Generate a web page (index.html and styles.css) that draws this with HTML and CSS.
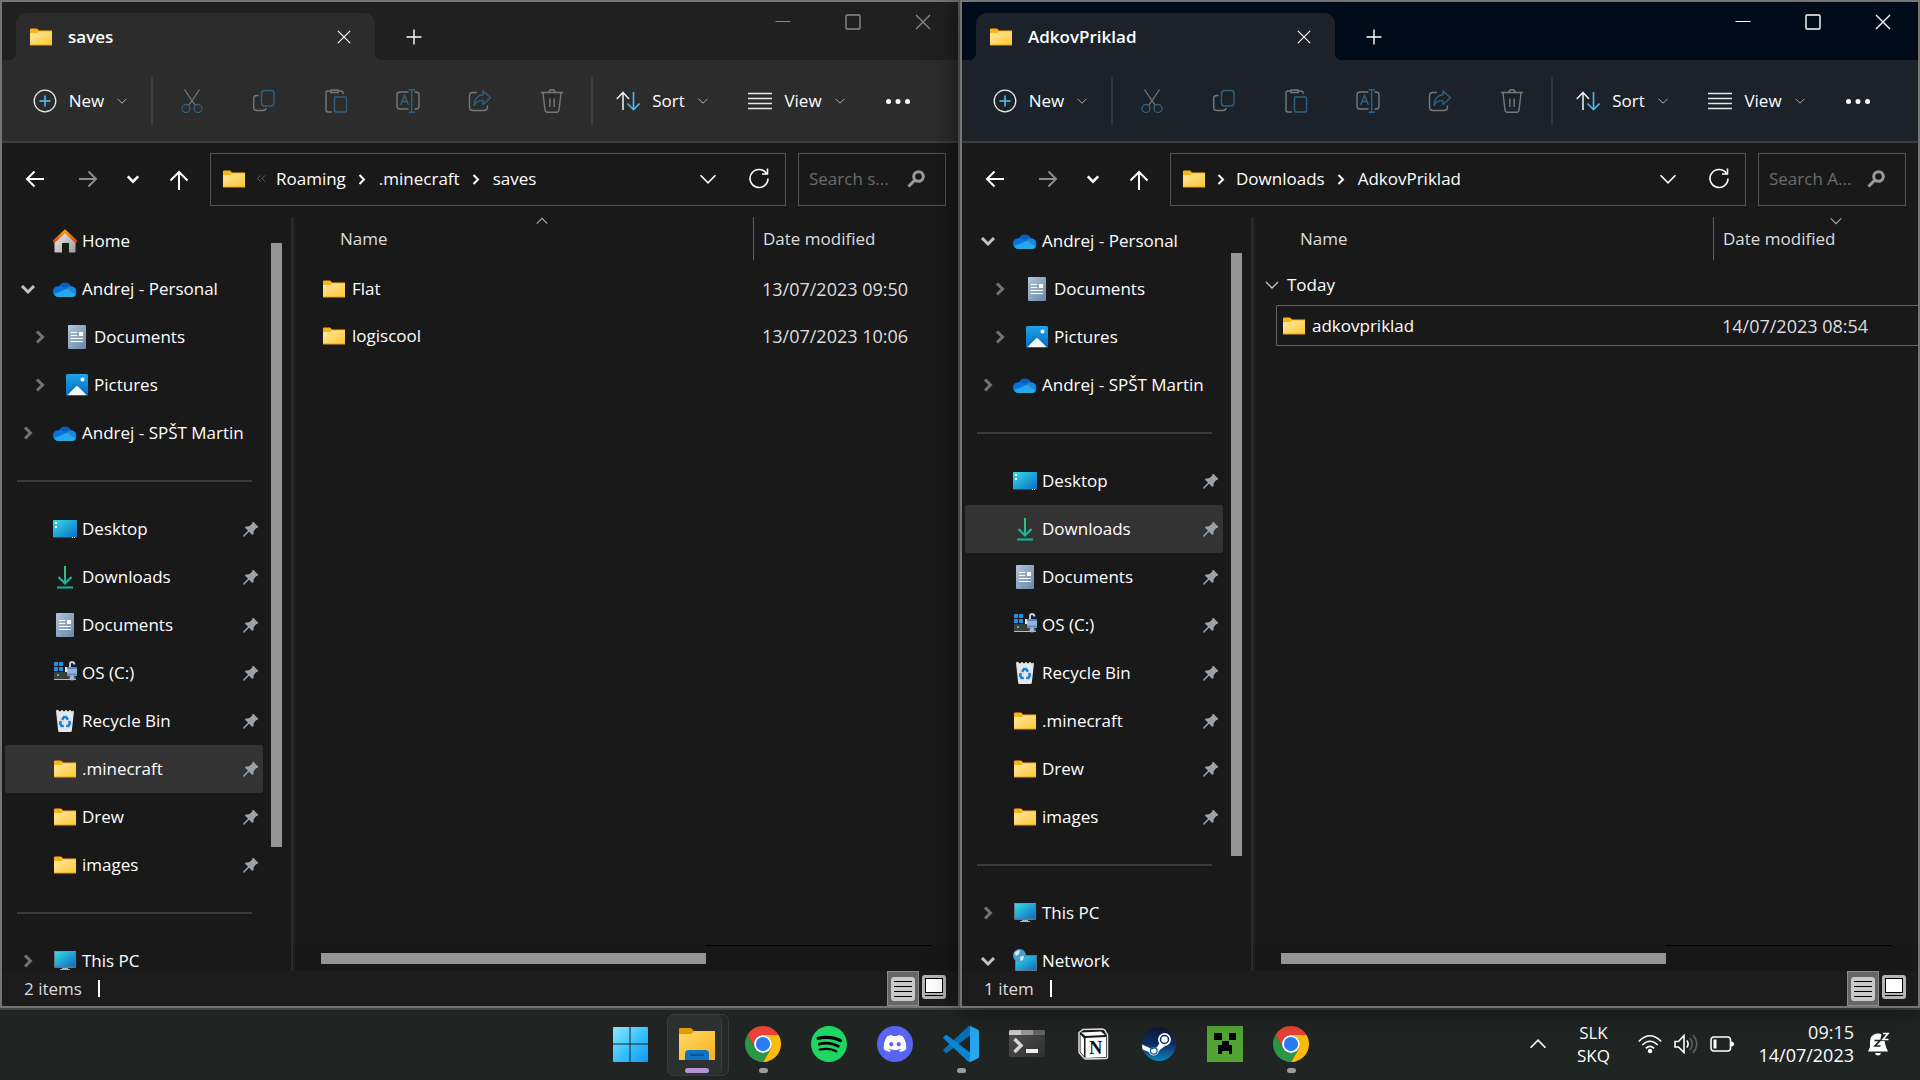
FILE: index.html
```
<!DOCTYPE html>
<html lang="en">
<head>
<meta charset="utf-8">
<title>File Explorer</title>
<link rel="stylesheet" href="styles.css">
</head>
<body>
<svg class="sprite" width="0" height="0" aria-hidden="true">
  <defs>
    <linearGradient id="g-folder" x1="0" y1="0" x2="1" y2="1"><stop offset="0" stop-color="#ffe9a2"/><stop offset="1" stop-color="#ffc732"/></linearGradient>
    <linearGradient id="g-screen" x1="0" y1="0" x2="1" y2="1"><stop offset="0" stop-color="#35dbe6"/><stop offset="1" stop-color="#0b6cc4"/></linearGradient>
    <linearGradient id="g-doc" x1="0" y1="0" x2="1" y2="1"><stop offset="0" stop-color="#b4c6dc"/><stop offset="1" stop-color="#6787a6"/></linearGradient>
    <linearGradient id="g-pic" x1="0" y1="0" x2="0" y2="1"><stop offset="0" stop-color="#1fa4e8"/><stop offset="1" stop-color="#0668c0"/></linearGradient>
    <linearGradient id="g-down" gradientUnits="userSpaceOnUse" x1="0" y1="0" x2="0" y2="24"><stop offset="0" stop-color="#37c978"/><stop offset="1" stop-color="#10b39a"/></linearGradient>
    <linearGradient id="g-wall" x1="0" y1="0" x2="1" y2="1"><stop offset="0" stop-color="#f2f2f2"/><stop offset="1" stop-color="#9b9b9b"/></linearGradient>
    <linearGradient id="g-roof" x1="0" y1="0" x2="0" y2="1"><stop offset="0" stop-color="#ff9a12"/><stop offset="1" stop-color="#d84f0c"/></linearGradient>
    <linearGradient id="g-win" x1="0" y1="0" x2="1" y2="1"><stop offset="0" stop-color="#8fe6ff"/><stop offset=".5" stop-color="#3cc3fb"/><stop offset="1" stop-color="#0c9af5"/></linearGradient>
    <linearGradient id="g-exp" x1="0" y1="0" x2="1" y2="1"><stop offset="0" stop-color="#ffd968"/><stop offset="1" stop-color="#f9b21b"/></linearGradient>
    <linearGradient id="g-steam" x1="0" y1="0" x2="0" y2="1"><stop offset="0" stop-color="#131634"/><stop offset=".5" stop-color="#0d2f63"/><stop offset="1" stop-color="#0f84bd"/></linearGradient>
    <linearGradient id="g-term" x1="0" y1="0" x2="1" y2="1"><stop offset="0" stop-color="#505050"/><stop offset="1" stop-color="#303030"/></linearGradient>
  </defs>
  <symbol id="folder" viewBox="0 0 24 24"><path d="M1 4.500Q1 3.500 2 3.500H8L10 5.500H23V20H1z" fill="#fcb414"/><path d="M1 8H8.500L10 6.500H23V20H1z" fill="url(#g-folder)"/><path d="M1 20H23" stroke="#e8a21a"/></symbol>
  <symbol id="home" viewBox="0 0 24 24"><path d="M1.500 11.500 12 2 22.500 11.500V22.500Q22.500 23.500 21.500 23.500H16V14H9V23.500H2.500Q1.500 23.500 1.500 22.500z" fill="url(#g-wall)"/><path d="M1.400 12.200 12 2.200 22.600 12.200" fill="none" stroke="url(#g-roof)" stroke-width="3" stroke-linecap="round"/></symbol>
  <symbol id="cloud" viewBox="0 0 24 24"><path d="M6 9.500A6.500 6 0 0 1 17.700 8.500L20 12 10 14z" fill="#0a5fbb"/><path d="M5 20A5.200 5.300 0 0 1 5.500 9.200Q8.500 8.200 14 12L10 20z" fill="#0a74d6"/><path d="M12.500 12.500Q15.500 8 19 9.500A5 5.300 0 0 1 19 20H15z" fill="#1588dd"/><path d="M1.500 17 14 11.700 22.800 17.500Q22 20 19 20H5Q2.500 20 1.500 17z" fill="#28a8ea"/></symbol>
  <symbol id="doc" viewBox="0 0 24 24"><rect x="3" y="0" width="18" height="24" rx="1" fill="url(#g-doc)"/><path d="M6 7.500H12M6 10.500H12M6 13.500H18M6 16.500H18" stroke="#fff"/><rect x="14" y="7" width="4" height="4" fill="#fff"/></symbol>
  <symbol id="pic" viewBox="0 0 24 24"><rect x="1" y="1" width="22" height="22" rx="1.500" fill="url(#g-pic)"/><path d="M2.500 22 11 13.500Q12 12.500 13 13.500L21.500 22z" fill="#f4f8ff"/><circle cx="17.500" cy="6.500" r="2" fill="#fff"/></symbol>
  <symbol id="desk" viewBox="0 0 24 24"><rect x="0" y="3" width="24" height="18" rx="1" fill="url(#g-screen)"/><path d="M0 20.500H24" stroke="#0a4f8a"/><path d="M2 5h2v2h-2zM2 9h2v2h-2zM19 20h1v1h-1zM21 20h1v1h-1z" fill="#fff"/></symbol>
  <symbol id="down" viewBox="0 0 24 24"><path d="M12 1V18M5.500 12 12 18.500 18.500 12M4 22.500H20" fill="none" stroke="url(#g-down)" stroke-width="2"/></symbol>
  <symbol id="drive" viewBox="0 0 24 24"><path d="M1 7 3 4H20L23 9V19H1z" fill="#e6e9ee"/><rect x="1" y="11" width="22" height="7" fill="#3b3d40"/><path d="M1 18.500H23" stroke="#bbb"/><rect x="4" y="13" width="2" height="2" fill="#2edb3a"/><path d="M0 0h12v11h-12z" fill="#191919"/><path d="M1 1h4v4h-4zM6 1h4v4h-4zM1 6h4v4h-4zM6 6h4v4h-4z" fill="#1a94e6"/><path d="M10 3h14v3h-14z" fill="#191919"/><path d="M17 7V3Q17 1 19 1T21.500 3.500" fill="none" stroke="#c9ced6" stroke-width="2"/><rect x="14" y="6" width="10" height="9" rx="1" fill="#9fb4cc"/><path d="M14 7H24M14 13.500H24" stroke="#3e90d8" stroke-width="2"/><circle cx="19" cy="17" r="2.500" fill="#aeb5bd"/></symbol>
  <symbol id="bin" viewBox="0 0 24 24"><path d="M3 2 21 2 18.800 22Q18.700 23 17.700 23H6.300Q5.300 23 5.200 22z" fill="#e4e7ea"/><path d="M3 2 5 1 7 3 9 1 11 3 13 1 15 3 17 1 19 3 21 2" fill="#fff" stroke="#b9bec4"/><g fill="none" stroke="#1782dd" stroke-width="2.500"><path d="M9 10.800 11 8H13L15 10.800M16 12 17 14.500 15.500 17H13.200M10.800 17H8.500L7 14.500 8 12"/></g></symbol>
  <symbol id="pc" viewBox="0 0 24 24"><rect x="1" y="2" width="22" height="17" rx="1" fill="#5e7687"/><rect x="2" y="3" width="20" height="14.500" fill="url(#g-screen)"/><path d="M1 2.500H23" stroke="#7f939f"/><path d="M9 19h6v1h2v1H7v-1h2z" fill="#a8b8c4"/></symbol>
  <symbol id="net" viewBox="0 0 24 24"><rect x="2" y="6" width="22" height="16" fill="#5e7687"/><rect x="3" y="7" width="20" height="14" fill="url(#g-screen)"/><path d="M10 22h6v2h-6z" fill="#a8b8c4"/><circle cx="6.500" cy="6.500" r="6.500" fill="#4d9fce"/><path d="M1.500 4Q4 1 7 1.500L6 5 3 7zM7 8 11 6.500 10 11 7.500 12z" fill="#d3ecf7"/></symbol>
  <symbol id="pin" viewBox="0 0 16 16"><path d="M10.300.8 15.300 5.800 14.500 7 13 7.200 10.700 10.200 10.600 13 9.300 14 6 10.700 1.300 15.500 0 15.700.2 14.400 5 9.700 1.900 6.600 3 5.400 6 5.300 9 3 9.200 1.400z" fill="#98a3aa"/></symbol>
  <symbol id="chev-r" viewBox="0 0 16 16"><path d="M5 2.500 10.500 8 5 13.500" fill="none" stroke="currentColor" stroke-width="3"/></symbol>
  <symbol id="chev-d" viewBox="0 0 16 16"><path d="M2 5 8 11 14 5" fill="none" stroke="currentColor" stroke-width="3"/></symbol>
  <symbol id="thin-d" viewBox="0 0 16 16"><path d="M2 5 8 11 14 5" fill="none" stroke="currentColor" stroke-width="1.300"/></symbol>
  <symbol id="thin-u" viewBox="0 0 16 16"><path d="M2 11 8 5 14 11" fill="none" stroke="currentColor" stroke-width="1.300"/></symbol>
  <symbol id="crumb" viewBox="0 0 12 12"><path d="M3.500 2 8 6.500 3.500 11" fill="none" stroke="currentColor" stroke-width="2"/></symbol>
  <symbol id="crumbs" viewBox="0 0 12 12"><path d="M5.500 2.500 2.500 5.500 5.500 8.500M10 2.500 7 5.500 10 8.500" fill="none" stroke="#666"/></symbol>
  <symbol id="x" viewBox="0 0 16 16"><path d="M1 1 15 15M15 1 1 15" stroke="currentColor" stroke-width="1.400"/></symbol>
  <symbol id="plus" viewBox="0 0 16 16"><path d="M8 .5V15.500M.5 8H15.500" stroke="currentColor" stroke-width="1.400"/></symbol>
  <symbol id="min" viewBox="0 0 16 16"><path d="M.5 7.500H15.500" stroke="currentColor"/></symbol>
  <symbol id="max" viewBox="0 0 16 16"><rect x="1" y="1" width="14" height="14" rx="1" fill="none" stroke="currentColor" stroke-width="1.400"/></symbol>
  <symbol id="new" viewBox="0 0 24 24"><circle cx="12" cy="12" r="10.800" fill="none" stroke="#e8e8e8" stroke-width="1.300"/><path d="M12 6.500V17.500M6.500 12H17.500" stroke="#55c1f7" stroke-width="1.500"/></symbol>
  <symbol id="cut" viewBox="0 0 24 24"><g fill="none" stroke-width="1.300"><path d="M4.500.5 15 16M19.500.5 9 16" stroke="#787878"/><circle cx="6" cy="19.500" r="4" stroke="#30627f"/><circle cx="18" cy="19.500" r="4" stroke="#30627f"/></g></symbol>
  <symbol id="copy" viewBox="0 0 24 24"><g fill="none" stroke-width="1.400"><path d="M6.500 6.500H5Q1.700 6.500 1.700 9.500V18.500Q1.700 21.500 5 21.500H11Q14 21.500 14 19" stroke="#787878"/><rect x="9.500" y="1.500" width="12.500" height="15.500" rx="3" stroke="#30627f"/></g></symbol>
  <symbol id="paste" viewBox="0 0 24 24"><g fill="none" stroke-width="1.400"><path d="M7 2H4Q2 2 2 4V21Q2 23 4 23H8M14 2H17Q19 2 19 4V5M7 1H14V3.500H7z" stroke="#787878"/><rect x="10.500" y="8" width="12" height="15" rx="1.500" stroke="#30627f"/></g></symbol>
  <symbol id="rename" viewBox="0 0 24 24"><g fill="none" stroke-width="1.400"><path d="M12.500 3H4Q1 3 1 6V17Q1 20 4 20H12.500M18.500 3H20Q23 3 23 6V17Q23 20 20 20H18.500" stroke="#787878"/><path d="M4.500 16 8.500 6.500 12.500 16M6 12.500H11M15.700 1V23M12.500.7H19M12.500 23.300H19" stroke="#30627f"/></g></symbol>
  <symbol id="share" viewBox="0 0 24 24"><g fill="none" stroke-width="1.400"><path d="M9 3.500H5Q1.500 3.500 1.500 7V18Q1.500 21.500 5 21.500H16Q19.500 21.500 19.500 18V16.500" stroke="#787878"/><path d="M15 2 22.500 8.700 15 15.500V11.700Q9 11 6 16.500 6.500 6.500 15 5.800z" stroke="#30627f" stroke-linejoin="round"/></g></symbol>
  <symbol id="trash" viewBox="0 0 24 24"><path d="M1 3.500H23M9 3Q9 .7 12 .7T15 3M3 4 5 21Q5.300 23.300 7.500 23.300H16.500Q18.700 23.300 19 21L21 4M9.800 9.500V18M14.200 9.500V18" fill="none" stroke="#787878" stroke-width="1.400"/></symbol>
  <symbol id="sort" viewBox="0 0 24 24"><g fill="none" stroke-width="1.600"><path d="M7 21V3.500M.8 10 7 3.500 13 10" stroke="#e8e8e8"/><path d="M17.500 3V20.500M11.500 14.500 17.500 20.700 23.500 14.500" stroke="#4cb9f5"/></g></symbol>
  <symbol id="view" viewBox="0 0 24 24"><path d="M0 4.500H24M0 9.500H24M0 14.500H24M0 19.500H24" stroke="#e8e8e8" stroke-width="1.400"/></symbol>
  <symbol id="more" viewBox="0 0 24 24"><g fill="#fff"><circle cx="2.500" cy="12.500" r="2.500"/><circle cx="12" cy="12.500" r="2.500"/><circle cx="21.500" cy="12.500" r="2.500"/></g></symbol>
  <symbol id="arrow-l" viewBox="0 0 24 24"><path d="M21 12H4M11.500 4.500 4 12 11.500 19.500" fill="none" stroke="currentColor" stroke-width="2"/></symbol>
  <symbol id="arrow-r" viewBox="0 0 24 24"><path d="M3 12H20M12.500 4.500 20 12 12.500 19.500" fill="none" stroke="currentColor" stroke-width="2"/></symbol>
  <symbol id="arrow-u" viewBox="0 0 24 24"><path d="M12 23V5M3.500 13.500 12 5 20.500 13.500" fill="none" stroke="currentColor" stroke-width="2"/></symbol>
  <symbol id="reload" viewBox="0 0 24 24"><path d="M19.500 6.500A9 9 0 1 0 21 11.500M20.500 1.500V7H15" fill="none" stroke="currentColor" stroke-width="1.600"/></symbol>
  <symbol id="lens" viewBox="0 0 18 18"><circle cx="11.500" cy="6.500" r="4.800" fill="none" stroke="#9a9a9a" stroke-width="3"/><path d="M8.500 9.500 1.500 16.500" stroke="#9a9a9a" stroke-width="3"/></symbol>
  <symbol id="v-list" viewBox="0 0 24 24"><rect width="24" height="24" rx="3" fill="#c9c9c9"/><path d="M3 4.500H21M3 9.500H21M3 14.500H21M3 19.500H21" stroke="#000"/></symbol>
  <symbol id="v-thumb" viewBox="0 0 24 24"><rect width="24" height="24" rx="3" fill="#b5b5b5"/><rect x="3.500" y="3.500" width="17" height="14" fill="#fff" stroke="#000"/><path d="M3 20.500H21" stroke="#000"/></symbol>

  <symbol id="windows" viewBox="0 0 36 36"><path d="M0 2Q0 1 1 1H16.500V17.500H0zM17.500 1H34Q35 1 35 2V17.500H17.500zM0 18.500H16.500V36H1Q0 36 0 35zM17.500 18.500H35V35Q35 36 34 36H17.500z" fill="url(#g-win)"/></symbol>
  <symbol id="explorer" viewBox="0 0 36 36"><path d="M0 3Q0 2 1 2H12L15 5H33V14H0z" fill="#e09a06"/><path d="M0 8H12L15.500 5H36V34H0z" fill="url(#g-exp)"/><path d="M6 34V28Q6 24 10 24H26Q30 24 30 28V34z" fill="#0f72c4"/><path d="M11 29H25" stroke="#084a86" stroke-width="1.500"/></symbol>
  <symbol id="chrome" viewBox="0 0 48 48"><path d="M24 12H44.780A24 24 0 0 0 3.220 12L13.610 30A12 12 0 0 1 24 12Z" fill="#ea4335"/><path d="M44.780 12A24 24 0 0 1 24 48L34.390 30A12 12 0 0 0 24 12Z" fill="#fbbc05"/><path d="M3.220 12A24 24 0 0 0 24 48L34.390 30A12 12 0 0 1 13.610 30Z" fill="#2a9648"/><circle cx="24" cy="24" r="12" fill="#fff"/><circle cx="24" cy="24" r="9.500" fill="#2b7cf0"/></symbol>
  <symbol id="spotify" viewBox="0 0 24 24"><circle cx="12" cy="12" r="11" fill="#000"/><path d="M12 0C5.400 0 0 5.400 0 12s5.400 12 12 12 12-5.400 12-12S18.660 0 12 0zm5.521 17.340c-.24.359-.66.48-1.021.24-2.820-1.740-6.360-2.101-10.561-1.141-.418.122-.779-.179-.899-.539-.12-.421.18-.78.54-.9 4.560-1.021 8.520-.6 11.640 1.320.42.18.479.659.301 1.020zm1.440-3.300c-.301.42-.841.6-1.262.3-3.239-1.980-8.159-2.580-11.939-1.380-.479.12-1.020-.12-1.140-.6-.12-.48.12-1.021.6-1.141C9.600 9.900 15 10.561 18.720 12.840c.361.181.54.78.241 1.200zm.12-3.360C15.240 8.400 8.820 8.160 5.160 9.301c-.6.179-1.200-.181-1.380-.721-.18-.601.18-1.200.72-1.381 4.260-1.260 11.280-1.020 15.721 1.621.539.3.719 1.020.419 1.560-.299.421-1.020.599-1.559.3z" fill="#1ed760"/></symbol>
  <symbol id="discord" viewBox="0 0 36 36"><circle cx="18" cy="18" r="18" fill="#5865f2"/><g transform="translate(6.700 6.200) scale(.94)"><path fill="#fff" d="M20.317 4.370a19.800 19.800 0 0 0-4.885-1.515.074.074 0 0 0-.079.037c-.21.375-.444.865-.608 1.250-1.845-.277-3.680-.277-5.487 0-.164-.394-.406-.875-.618-1.250a.077.077 0 0 0-.078-.037 19.736 19.736 0 0 0-4.885 1.515.07.07 0 0 0-.032.028C.533 9.046-.319 13.580.099 18.058a.082.082 0 0 0 .031.056c2.053 1.508 4.041 2.423 5.993 3.030a.078.078 0 0 0 .084-.028c.462-.63.873-1.295 1.226-1.994a.076.076 0 0 0-.042-.106c-.652-.248-1.274-.55-1.872-.892a.077.077 0 0 1-.008-.128c.126-.094.252-.192.372-.291a.074.074 0 0 1 .078-.011c3.928 1.793 8.180 1.793 12.061 0a.074.074 0 0 1 .079.010c.12.099.246.198.373.292a.077.077 0 0 1-.007.128 12.300 12.300 0 0 1-1.873.891.077.077 0 0 0-.041.107c.36.698.772 1.363 1.225 1.993a.076.076 0 0 0 .084.029c1.961-.607 3.950-1.522 6.002-3.030a.077.077 0 0 0 .031-.055c.5-5.177-.838-9.674-3.548-13.660a.061.061 0 0 0-.031-.029zM8.020 15.331c-1.182 0-2.157-1.086-2.157-2.419s.956-2.419 2.157-2.419c1.211 0 2.176 1.095 2.157 2.419 0 1.333-.956 2.419-2.157 2.419zm7.975 0c-1.183 0-2.157-1.086-2.157-2.419s.955-2.419 2.157-2.419c1.211 0 2.176 1.095 2.157 2.419 0 1.333-.946 2.419-2.157 2.419z"/></g></symbol>
  <symbol id="vscode" viewBox="0 0 36 36"><path d="M.6 23.500Q-.2 24.500.7 25.300L2.400 26.800Q3.200 27.500 4.200 26.700L27 9.500V.3Q25.700-.1 24.600.9z" fill="#0a6fb5"/><path d="M.6 12.500Q-.2 11.500.7 10.700L2.400 9.200Q3.200 8.500 4.200 9.300L27 26.500V35.700Q25.700 36.100 24.600 35.100z" fill="#0b87d2"/><path d="M24.600 35.100Q27 36.800 27 34V2Q27-.8 24.600.9 26-.5 28 .3L35 3.700Q36 4.200 36 5.300V30.700Q36 31.800 35 32.300L28 35.700Q26 36.500 24.600 35.100z" fill="#27a7f1"/></symbol>
  <symbol id="terminal" viewBox="0 0 36 36"><rect y="4" width="36" height="27" rx="1.500" fill="url(#g-term)"/><path d="M0 9V5.500Q0 4 1.500 4H12V9z" fill="#ccc"/><path d="M12 4H24V9H12z" fill="#9a9a9a"/><path d="M24 4H34.500Q36 4 36 5.500V9H24z" fill="#666"/><path d="M5.500 13 12 19.500 5.500 26" fill="none" stroke="#d6d6d6" stroke-width="3.500"/><rect x="17" y="23" width="12" height="4" fill="#eee"/></symbol>
  <symbol id="steam" viewBox="0 0 36 36"><circle cx="18" cy="18" r="17" fill="url(#g-steam)"/><path d="M1 18.500 11.500 23.200 16 21 19 16.500 24 20 19 23.800 17.500 26A5 5 0 0 1 8 26L1.500 23.500z" fill="#fff"/><circle cx="23.500" cy="13.500" r="6.500" fill="#fff"/><circle cx="23.500" cy="13.500" r="4" fill="#fff" stroke="#12305f" stroke-width="1.500"/><circle cx="12.800" cy="24.800" r="3.300" fill="none" stroke="#176398" stroke-width="1.300"/></symbol>
  <symbol id="creeper" viewBox="0 0 36 36"><rect width="36" height="36" fill="#52a535"/><path d="M7 7h8v7H7zM22 7h7v7h-7zM15 15h7v4h3v9h-3v-3h-7v3h-4v-9h4z" fill="#000"/></symbol>
  <symbol id="wifi" viewBox="0 0 24 20"><g fill="none" stroke="#fff" stroke-width="1.600"><path d="M.8 7.500Q12-4 23.200 7.500M4.300 11Q12 3.500 19.700 11M7.800 14.300Q12 10.500 16.200 14.300"/></g><circle cx="12" cy="17" r="2.200" fill="#fff"/></symbol>
  <symbol id="sound" viewBox="0 0 24 20"><g fill="none" stroke-width="1.600"><path d="M1 7.500V13H4.500L10 18.500V1.500L4.500 7.500z" stroke="#fff"/><path d="M12.800 6.500Q15.500 10 12.800 13.500" stroke="#fff"/><path d="M16 4Q20.500 10 16 16M19 1Q26.500 10 19 19" stroke="#5d605e"/></g></symbol>
  <symbol id="battery" viewBox="0 0 24 20"><rect x="1" y="3" width="19.500" height="14" rx="3" fill="none" stroke="#fff" stroke-width="1.600"/><path d="M21 7.500Q24 7.500 24 10T21 12.500z" fill="#fff"/><rect x="3.500" y="5.500" width="3" height="9" fill="#fff"/></symbol>
  <symbol id="bell" viewBox="0 0 24 24"><path d="M2 19.500 4 15V9.500Q4 2.500 11 1.500 14 1 15.500 2.500L14 9H18.500L20 15 22 19.500z" fill="#fff"/><path d="M9 21H15Q14.500 23.500 12 23.500T9 21z" fill="#fff"/><path d="M8.500 8.500H14L9 14H14.500" fill="none" stroke="#202422" stroke-width="1.700"/><path d="M17 1.500H22L17 7.500H22.500" fill="none" stroke="#fff" stroke-width="1.600"/></symbol>
</svg>

<main class="desktop">
  <section class="window inactive" aria-label="saves">
    <header class="titlebar">
      <div class="tab"><svg class="i24"><use href="#folder"/></svg><span class="tab-name">saves</span><button class="tab-close" aria-label="Close tab"><svg class="i14"><use href="#x"/></svg></button></div>
      <button class="tab-add" aria-label="New tab"><svg class="i16"><use href="#plus"/></svg></button>
      <div class="controls"><button aria-label="Minimise"><svg class="i16"><use href="#min"/></svg></button><button aria-label="Maximise"><svg class="i16"><use href="#max"/></svg></button><button aria-label="Close"><svg class="i16"><use href="#x"/></svg></button></div>
    </header>
    <div class="toolbar">
      <button class="menu new"><svg class="i24"><use href="#new"/></svg><span>New</span><svg class="caret"><use href="#thin-d"/></svg></button>
      <span class="rule"></span>
      <div class="tools">
        <button disabled aria-label="Cut"><svg class="i24"><use href="#cut"/></svg></button><button disabled aria-label="Copy"><svg class="i24"><use href="#copy"/></svg></button><button disabled aria-label="Paste"><svg class="i24"><use href="#paste"/></svg></button><button disabled aria-label="Rename"><svg class="i24"><use href="#rename"/></svg></button><button disabled aria-label="Share"><svg class="i24"><use href="#share"/></svg></button><button disabled aria-label="Delete"><svg class="i24"><use href="#trash"/></svg></button>
      </div>
      <span class="rule"></span>
      <button class="menu sort"><svg class="i24"><use href="#sort"/></svg><span>Sort</span><svg class="caret"><use href="#thin-d"/></svg></button>
      <button class="menu view"><svg class="i24"><use href="#view"/></svg><span>View</span><svg class="caret"><use href="#thin-d"/></svg></button>
      <button class="more" aria-label="See more"><svg class="i24"><use href="#more"/></svg></button>
    </div>
    <div class="locate">
      <button class="go wide" aria-label="Back"><svg class="i24"><use href="#arrow-l"/></svg></button><button class="go wide dim" aria-label="Forward"><svg class="i24"><use href="#arrow-r"/></svg></button><button class="go" aria-label="Recent"><svg class="i14"><use href="#chev-d"/></svg></button><button class="go wide" aria-label="Up"><svg class="i24"><use href="#arrow-u"/></svg></button>
      <div class="address">
        <svg class="i24"><use href="#folder"/></svg><span class="sep first"><svg class="i12"><use href="#crumbs"/></svg></span><a href="#">Roaming</a><span class="sep"><svg class="i12"><use href="#crumb"/></svg></span><a href="#">.minecraft</a><span class="sep"><svg class="i12"><use href="#crumb"/></svg></span><a href="#">saves</a>
        <button class="addr-btn push" aria-label="Previous locations"><svg class="i20"><use href="#thin-d"/></svg></button><button class="addr-btn" aria-label="Refresh"><svg class="i24"><use href="#reload"/></svg></button>
      </div>
      <div class="search"><input type="text" placeholder="Search s..." aria-label="Search saves"><button aria-label="Search"><svg class="i18"><use href="#lens"/></svg></button></div>
    </div>
    <div class="body">
      <nav class="tree" aria-label="Folders">
        <ul>
          <li><a href="#"><svg class="i24"><use href="#home"/></svg>Home</a></li>
          <li><button class="exp open" aria-label="Collapse"><svg class="i16"><use href="#chev-d"/></svg></button><a href="#"><svg class="i24"><use href="#cloud"/></svg>Andrej - Personal</a></li>
          <li class="sub"><button class="exp" aria-label="Expand"><svg class="i16"><use href="#chev-r"/></svg></button><a href="#"><svg class="i24"><use href="#doc"/></svg>Documents</a></li>
          <li class="sub"><button class="exp" aria-label="Expand"><svg class="i16"><use href="#chev-r"/></svg></button><a href="#"><svg class="i24"><use href="#pic"/></svg>Pictures</a></li>
          <li><button class="exp" aria-label="Expand"><svg class="i16"><use href="#chev-r"/></svg></button><a href="#"><svg class="i24"><use href="#cloud"/></svg>Andrej - SPŠT Martin</a></li>
          <li class="line"></li>
          <li><a href="#"><svg class="i24"><use href="#desk"/></svg>Desktop</a><svg class="i16"><use href="#pin"/></svg></li>
          <li><a href="#"><svg class="i24"><use href="#down"/></svg>Downloads</a><svg class="i16"><use href="#pin"/></svg></li>
          <li><a href="#"><svg class="i24"><use href="#doc"/></svg>Documents</a><svg class="i16"><use href="#pin"/></svg></li>
          <li><a href="#"><svg class="i24"><use href="#drive"/></svg>OS (C:)</a><svg class="i16"><use href="#pin"/></svg></li>
          <li><a href="#"><svg class="i24"><use href="#bin"/></svg>Recycle Bin</a><svg class="i16"><use href="#pin"/></svg></li>
          <li class="selected"><a href="#"><svg class="i24"><use href="#folder"/></svg>.minecraft</a><svg class="i16"><use href="#pin"/></svg></li>
          <li><a href="#"><svg class="i24"><use href="#folder"/></svg>Drew</a><svg class="i16"><use href="#pin"/></svg></li>
          <li><a href="#"><svg class="i24"><use href="#folder"/></svg>images</a><svg class="i16"><use href="#pin"/></svg></li>
          <li class="line"></li>
          <li><button class="exp" aria-label="Expand"><svg class="i16"><use href="#chev-r"/></svg></button><a href="#"><svg class="i24"><use href="#pc"/></svg>This PC</a></li>
        </ul>
        <div class="vscroll"><div class="vthumb"></div></div>
      </nav>
      <div class="pane">
        <table class="files">
          <thead><tr><th class="name" aria-sort="ascending"><div class="cell">Name<svg class="mark"><use href="#thin-u"/></svg></div></th><th class="date"><div class="cell">Date modified</div></th></tr></thead>
          <tbody>
            <tr class="row"><td class="name"><div class="cell"><svg class="i24"><use href="#folder"/></svg>Flat</div></td><td class="date"><div class="cell">13/07/2023 09:50</div></td></tr>
            <tr class="row"><td class="name"><div class="cell"><svg class="i24"><use href="#folder"/></svg>logiscool</div></td><td class="date"><div class="cell">13/07/2023 10:06</div></td></tr>
          </tbody>
        </table>
        <div class="hscroll"><div class="hthumb"></div><div class="htrack"></div></div>
      </div>
    </div>
    <footer class="status"><span>2 items</span><span class="bar"></span><button class="mode on" aria-label="Details"><svg class="i24"><use href="#v-list"/></svg></button><button class="mode" aria-label="Large icons"><svg class="i24"><use href="#v-thumb"/></svg></button></footer>
  </section>

  <section class="window active" aria-label="AdkovPriklad">
    <header class="titlebar">
      <div class="tab"><svg class="i24"><use href="#folder"/></svg><span class="tab-name">AdkovPriklad</span><button class="tab-close" aria-label="Close tab"><svg class="i14"><use href="#x"/></svg></button></div>
      <button class="tab-add" aria-label="New tab"><svg class="i16"><use href="#plus"/></svg></button>
      <div class="controls"><button aria-label="Minimise"><svg class="i16"><use href="#min"/></svg></button><button aria-label="Maximise"><svg class="i16"><use href="#max"/></svg></button><button aria-label="Close"><svg class="i16"><use href="#x"/></svg></button></div>
    </header>
    <div class="toolbar">
      <button class="menu new"><svg class="i24"><use href="#new"/></svg><span>New</span><svg class="caret"><use href="#thin-d"/></svg></button>
      <span class="rule"></span>
      <div class="tools">
        <button disabled aria-label="Cut"><svg class="i24"><use href="#cut"/></svg></button><button disabled aria-label="Copy"><svg class="i24"><use href="#copy"/></svg></button><button disabled aria-label="Paste"><svg class="i24"><use href="#paste"/></svg></button><button disabled aria-label="Rename"><svg class="i24"><use href="#rename"/></svg></button><button disabled aria-label="Share"><svg class="i24"><use href="#share"/></svg></button><button disabled aria-label="Delete"><svg class="i24"><use href="#trash"/></svg></button>
      </div>
      <span class="rule"></span>
      <button class="menu sort"><svg class="i24"><use href="#sort"/></svg><span>Sort</span><svg class="caret"><use href="#thin-d"/></svg></button>
      <button class="menu view"><svg class="i24"><use href="#view"/></svg><span>View</span><svg class="caret"><use href="#thin-d"/></svg></button>
      <button class="more" aria-label="See more"><svg class="i24"><use href="#more"/></svg></button>
    </div>
    <div class="locate">
      <button class="go wide" aria-label="Back"><svg class="i24"><use href="#arrow-l"/></svg></button><button class="go wide dim" aria-label="Forward"><svg class="i24"><use href="#arrow-r"/></svg></button><button class="go" aria-label="Recent"><svg class="i14"><use href="#chev-d"/></svg></button><button class="go wide" aria-label="Up"><svg class="i24"><use href="#arrow-u"/></svg></button>
      <div class="address">
        <svg class="i24"><use href="#folder"/></svg><span class="sep first"><svg class="i12"><use href="#crumb"/></svg></span><a href="#">Downloads</a><span class="sep"><svg class="i12"><use href="#crumb"/></svg></span><a href="#">AdkovPriklad</a>
        <button class="addr-btn push" aria-label="Previous locations"><svg class="i20"><use href="#thin-d"/></svg></button><button class="addr-btn" aria-label="Refresh"><svg class="i24"><use href="#reload"/></svg></button>
      </div>
      <div class="search"><input type="text" placeholder="Search A..." aria-label="Search AdkovPriklad"><button aria-label="Search"><svg class="i18"><use href="#lens"/></svg></button></div>
    </div>
    <div class="body">
      <nav class="tree" aria-label="Folders">
        <ul>
          <li><button class="exp open" aria-label="Collapse"><svg class="i16"><use href="#chev-d"/></svg></button><a href="#"><svg class="i24"><use href="#cloud"/></svg>Andrej - Personal</a></li>
          <li class="sub"><button class="exp" aria-label="Expand"><svg class="i16"><use href="#chev-r"/></svg></button><a href="#"><svg class="i24"><use href="#doc"/></svg>Documents</a></li>
          <li class="sub"><button class="exp" aria-label="Expand"><svg class="i16"><use href="#chev-r"/></svg></button><a href="#"><svg class="i24"><use href="#pic"/></svg>Pictures</a></li>
          <li><button class="exp" aria-label="Expand"><svg class="i16"><use href="#chev-r"/></svg></button><a href="#"><svg class="i24"><use href="#cloud"/></svg>Andrej - SPŠT Martin</a></li>
          <li class="line"></li>
          <li><a href="#"><svg class="i24"><use href="#desk"/></svg>Desktop</a><svg class="i16"><use href="#pin"/></svg></li>
          <li class="selected"><a href="#"><svg class="i24"><use href="#down"/></svg>Downloads</a><svg class="i16"><use href="#pin"/></svg></li>
          <li><a href="#"><svg class="i24"><use href="#doc"/></svg>Documents</a><svg class="i16"><use href="#pin"/></svg></li>
          <li><a href="#"><svg class="i24"><use href="#drive"/></svg>OS (C:)</a><svg class="i16"><use href="#pin"/></svg></li>
          <li><a href="#"><svg class="i24"><use href="#bin"/></svg>Recycle Bin</a><svg class="i16"><use href="#pin"/></svg></li>
          <li><a href="#"><svg class="i24"><use href="#folder"/></svg>.minecraft</a><svg class="i16"><use href="#pin"/></svg></li>
          <li><a href="#"><svg class="i24"><use href="#folder"/></svg>Drew</a><svg class="i16"><use href="#pin"/></svg></li>
          <li><a href="#"><svg class="i24"><use href="#folder"/></svg>images</a><svg class="i16"><use href="#pin"/></svg></li>
          <li class="line"></li>
          <li><button class="exp" aria-label="Expand"><svg class="i16"><use href="#chev-r"/></svg></button><a href="#"><svg class="i24"><use href="#pc"/></svg>This PC</a></li>
          <li><button class="exp open" aria-label="Collapse"><svg class="i16"><use href="#chev-d"/></svg></button><a href="#"><svg class="i24"><use href="#net"/></svg>Network</a></li>
        </ul>
        <div class="vscroll lower"><div class="vthumb"></div></div>
      </nav>
      <div class="pane">
        <table class="files grouped">
          <thead><tr><th class="name"><div class="cell">Name</div></th><th class="date" aria-sort="descending"><div class="cell">Date modified<svg class="mark"><use href="#thin-d"/></svg></div></th></tr></thead>
          <tbody>
            <tr class="group"><th colspan="2"><button><svg class="i16"><use href="#thin-d"/></svg>Today</button></th></tr>
            <tr class="row"><td class="name"><div class="cell"><svg class="i24"><use href="#folder"/></svg>adkovpriklad</div></td><td class="date"><div class="cell">14/07/2023 08:54</div></td></tr>
          </tbody>
        </table>
        <div class="hscroll"><div class="hthumb"></div><div class="htrack"></div></div>
      </div>
    </div>
    <footer class="status"><span>1 item</span><span class="bar"></span><button class="mode on" aria-label="Details"><svg class="i24"><use href="#v-list"/></svg></button><button class="mode" aria-label="Large icons"><svg class="i24"><use href="#v-thumb"/></svg></button></footer>
  </section>
</main>

<footer class="taskbar">
  <div class="apps">
    <button aria-label="Start"><svg class="i36"><use href="#windows"/></svg></button>
    <button class="current" aria-label="File Explorer"><svg class="i36"><use href="#explorer"/></svg><span class="underline"></span></button>
    <button class="running" aria-label="Chrome"><svg class="i36"><use href="#chrome"/></svg></button>
    <button aria-label="Spotify"><svg class="i36"><use href="#spotify"/></svg></button>
    <button aria-label="Discord"><svg class="i36"><use href="#discord"/></svg></button>
    <button class="running" aria-label="Visual Studio Code"><svg class="i36"><use href="#vscode"/></svg></button>
    <button aria-label="Terminal"><svg class="i36"><use href="#terminal"/></svg></button>
    <button aria-label="Notion"><svg class="i36" viewBox="0 0 36 36"><path d="M4 6.500 8 3.500 27 3Q29 3 30 4.500L32.500 9V31Q32.500 32.500 31 32.500L11 33Q10 33 9 32L4.500 27Q4 26 4 25z" fill="#1b1b1b" stroke="#e3e3e3" stroke-width="1.500"/><path d="M6 6.500 26 5.500 30 9 10.500 10z" fill="#fff"/><path d="M5.500 8.500 9 12.500V30L5.500 26z" fill="#fff"/><path d="M10.500 12 31 11V31L10.500 32z" fill="#fff"/><text class="notion-n" x="20.700" y="28" text-anchor="middle">N</text></svg></button>
    <button aria-label="Steam"><svg class="i36"><use href="#steam"/></svg></button>
    <button aria-label="Minecraft"><svg class="i36"><use href="#creeper"/></svg></button>
    <button class="running" aria-label="Chrome, second profile"><svg class="i36"><use href="#chrome"/></svg></button>
  </div>
  <div class="tray">
    <button aria-label="Hidden icons"><svg class="i20"><use href="#thin-u"/></svg></button>
    <button class="lang"><span>SLK</span><span>SKQ</span></button>
    <button class="quick" aria-label="Quick settings"><svg><use href="#wifi"/></svg><svg><use href="#sound"/></svg><svg><use href="#battery"/></svg></button>
    <button class="clock"><span>09:15</span><span>14/07/2023</span></button>
    <button aria-label="Notifications"><svg class="i24"><use href="#bell"/></svg></button>
  </div>
</footer>
</body>
</html>
```
FILE: styles.css
```
* { box-sizing: border-box; }

body {
  margin: 0;
  height: 100vh;
  display: flex;
  flex-direction: column;
  overflow: hidden;
  background: #202422;
  color: #fff;
  font: 17px/24px "Open Sans", "Noto Sans", sans-serif;
}

button {
  display: flex;
  align-items: center;
  justify-content: center;
  padding: 0;
  border: 0;
  background: none;
  color: inherit;
  font: inherit;
}

a { color: inherit; text-decoration: none; }
svg { display: block; flex: none; }

.sprite { position: absolute; }
.i12 { width: 12px; height: 12px; }
.i14 { width: 14px; height: 14px; }
.i16 { width: 16px; height: 16px; }
.i18 { width: 18px; height: 18px; }
.i20 { width: 20px; height: 20px; }
.i24 { width: 24px; height: 24px; }
.i36 { width: 36px; height: 36px; }

/* Windows side by side */
.desktop {
  flex: 1;
  min-height: 0;
  display: grid;
  grid-template-columns: 1fr 1fr;
  border-bottom: 2px solid #434544;
}

.window {
  min-width: 0;
  min-height: 0;
  display: flex;
  flex-direction: column;
  border: 2px solid #747474;
  background: #191919;
}

.inactive { --title: #202020; --bar: #2c2c2c; --rule: #3e3e3e; --controls: #8a8a8a; border-right-color: #626262; }
.active { --title: #000b1a; --bar: #1b222a; --rule: #303740; --controls: #fff; z-index: 1; box-shadow: 0 0 28px rgba(0, 0, 0, .6); }

.titlebar {
  height: 58px;
  flex: none;
  display: flex;
  align-items: flex-end;
  padding-left: 14px;
  background: var(--title);
}

.tab {
  position: relative;
  width: 359px;
  height: 47px;
  display: flex;
  align-items: center;
  padding: 0 21px 0 13px;
  border-radius: 11px 11px 0 0;
  background: var(--bar);
}

.tab::before, .tab::after {
  content: "";
  position: absolute;
  bottom: 0;
  width: 6px;
  height: 6px;
}
.tab::before { left: -6px; background: radial-gradient(circle at 0 0, transparent 6px, var(--bar) 6px); }
.tab::after { right: -6px; background: radial-gradient(circle at 100% 0, transparent 6px, var(--bar) 6px); }

.tab-name { margin-left: 15px; font-weight: 600; }
.tab-close { width: 20px; height: 24px; margin-left: auto; }
.tab-add { width: 48px; height: 47px; margin-left: 15px; }

.controls {
  display: flex;
  align-self: flex-start;
  margin-left: auto;
  color: var(--controls);
}
.controls button { width: 70px; height: 40px; }

.toolbar {
  height: 83px;
  flex: none;
  display: flex;
  align-items: center;
  padding-left: 32px;
  border-bottom: 2px solid #3d3d3d;
  background: var(--bar);
}

.menu {
  display: grid;
  grid-template-columns: 24px 1fr 12px;
  column-gap: 12px;
  align-items: center;
  text-align: left;
}
.caret { width: 12px; height: 12px; color: #b5b5b5; }
.new { width: 93px; margin-right: 24px; }
.sort { width: 89px; margin-left: 25px; }
.view { width: 94px; margin-left: 43px; }
.more { margin-left: 42px; }

.rule { width: 2px; height: 48px; background: var(--rule); }
.tools { display: flex; padding: 0 3px; }
.tools button { width: 72px; height: 48px; }

.locate {
  height: 74px;
  flex: none;
  display: flex;
  align-items: center;
  padding: 0 12px 2px 6px;
}
.go { width: 38px; height: 48px; }
.go.wide { width: 53px; }
.dim { color: #8c8c8c; }

.address {
  flex: 1;
  min-width: 0;
  height: 53px;
  display: flex;
  align-items: center;
  margin-left: 5px;
  padding: 0 1px 0 11px;
  border: 1px solid #535353;
}
.sep { width: 33px; display: flex; justify-content: center; }
.sep.first { width: 30px; }
.addr-btn { width: 51px; height: 48px; }
.push { margin-left: auto; }

.search {
  width: 148px;
  height: 53px;
  display: flex;
  align-items: center;
  margin-left: 12px;
  padding: 0 20px 0 10px;
  border: 1px solid #535353;
}
.search input {
  flex: 1;
  width: 0;
  padding: 0;
  border: 0;
  outline: 0;
  background: none;
  color: #fff;
  font: inherit;
}
.search input::placeholder { color: #6c6c6c; opacity: 1; }

.body { flex: 1; min-height: 0; display: flex; }

/* Folder tree */
.tree {
  width: 293px;
  flex: none;
  display: flex;
  overflow: hidden;
  padding-left: 3px;
  border-right: 2px solid #202020;
  box-shadow: inset -2px 0 #2b2b2b;
}
.tree ul { width: 258px; height: 0; margin: 0; padding: 0; list-style: none; }
.tree li { height: 48px; display: flex; align-items: center; padding: 0 4px 0 15px; }
.tree li > a { flex: 1; display: flex; align-items: center; gap: 5px; margin-left: 17px; white-space: nowrap; }
.tree li > a:first-child { margin-left: 33px; }
.tree .sub { padding-left: 27px; }
.tree .line { padding: 0 11px 0 12px; }
.line::before { content: ""; flex: 1; height: 2px; background: #3a3a3a; }
.tree .selected { border-radius: 2px; background: #333; }
.exp { width: 16px; height: 24px; color: #747474; }
.exp.open { color: #c4c4c4; }

.vscroll { width: 11px; margin-left: 8px; padding-top: 26px; }
.vscroll.lower { padding-top: 36px; }
.vthumb { height: 83%; background: #949494; }
.lower .vthumb { height: 84%; }

/* File list */
.pane { flex: 1; min-width: 0; display: flex; flex-direction: column; }
.files { width: 100%; border-collapse: collapse; table-layout: fixed; }
.files th, .files td { padding: 0; font-weight: 400; text-align: left; }
.files .name { padding-left: 21px; }
.files .date { width: 205px; }
.cell { position: relative; height: 47px; display: flex; align-items: center; gap: 6px; white-space: nowrap; }

thead tr { height: 48px; vertical-align: top; color: #dedede; }
thead .cell { height: 43px; }
thead .name .cell { padding-left: 24px; }
thead .date .cell { padding-left: 9px; border-left: 1px solid #606060; }
.mark { position: absolute; top: -3px; left: 50%; width: 14px; height: 14px; color: #aaa; }
.date .mark { left: 115px; }

.row .name .cell { padding-left: 6px; }
.row .date .cell { padding-left: 9px; color: #dedede; font-size: 18px; }
.grouped .row .cell { height: 41px; border: solid #636363; border-width: 1px 0; }
.grouped .row .name .cell { padding-left: 5px; border-left-width: 1px; border-radius: 2px 0 0 2px; }
.group th { height: 40px; padding-left: 9px; }
.group button { gap: 7px; }
.group svg { color: #c4c4c4; }

.hscroll { height: 26px; display: flex; margin-top: auto; padding: 0 26px; background: #171717; }
.hthumb { width: 63%; height: 11px; margin-top: 8px; background: #949494; }
.htrack { flex: 1; border-top: 1px solid #000; }

.status {
  height: 35px;
  flex: none;
  display: flex;
  align-items: center;
  padding: 0 12px 0 22px;
  background: #1c1c1c;
  color: #dedede;
}
.bar { width: 2px; height: 17px; margin: 0 auto 0 16px; background: #fff; }
.mode { padding: 0 0 4px 3px; }
.mode.on { width: 32px; height: 35px; padding: 0; border: 1px solid #8c8c8c; background: #666; }

/* Taskbar */
.taskbar {
  height: 70px;
  flex: none;
  display: grid;
  grid-template-columns: 1fr auto 1fr;
  align-items: center;
  padding-bottom: 2px;
}
.apps { grid-column: 2; display: flex; padding-left: 2px; }
.apps button { position: relative; width: 66px; height: 60px; }

/* Stacked plates show that more than one window is open */
.current::before, .current::after {
  content: "";
  position: absolute;
  top: 0;
  left: 3px;
  width: 53px;
  height: 60px;
  border: 1px solid #383c3a;
  border-radius: 7px;
  background: #2c302e;
}
.current::before { width: 60px; background: #252927; }
.current .i36 { position: relative; z-index: 1; }
.underline {
  position: absolute;
  z-index: 1;
  left: 21px;
  bottom: 1px;
  width: 24px;
  height: 5px;
  border-radius: 3px;
  background: #b694d2;
}

.running::after {
  content: "";
  position: absolute;
  left: 29px;
  bottom: 1px;
  width: 9px;
  height: 5px;
  border-radius: 3px;
  background: #9b9d9c;
}

.notion-n { font: 700 18px "Liberation Serif", serif; fill: #111; }

.tray { grid-column: 3; justify-self: end; display: flex; align-items: center; padding-right: 30px; }
.lang, .clock { flex-direction: column; line-height: 23px; }
.lang { width: 50px; margin-left: 20px; }
.quick { gap: 12px; margin-left: 20px; }
.quick svg { width: 24px; height: 20px; }
.clock { align-items: flex-end; margin: 0 12px 0 24px; font-size: 18px; }
```
